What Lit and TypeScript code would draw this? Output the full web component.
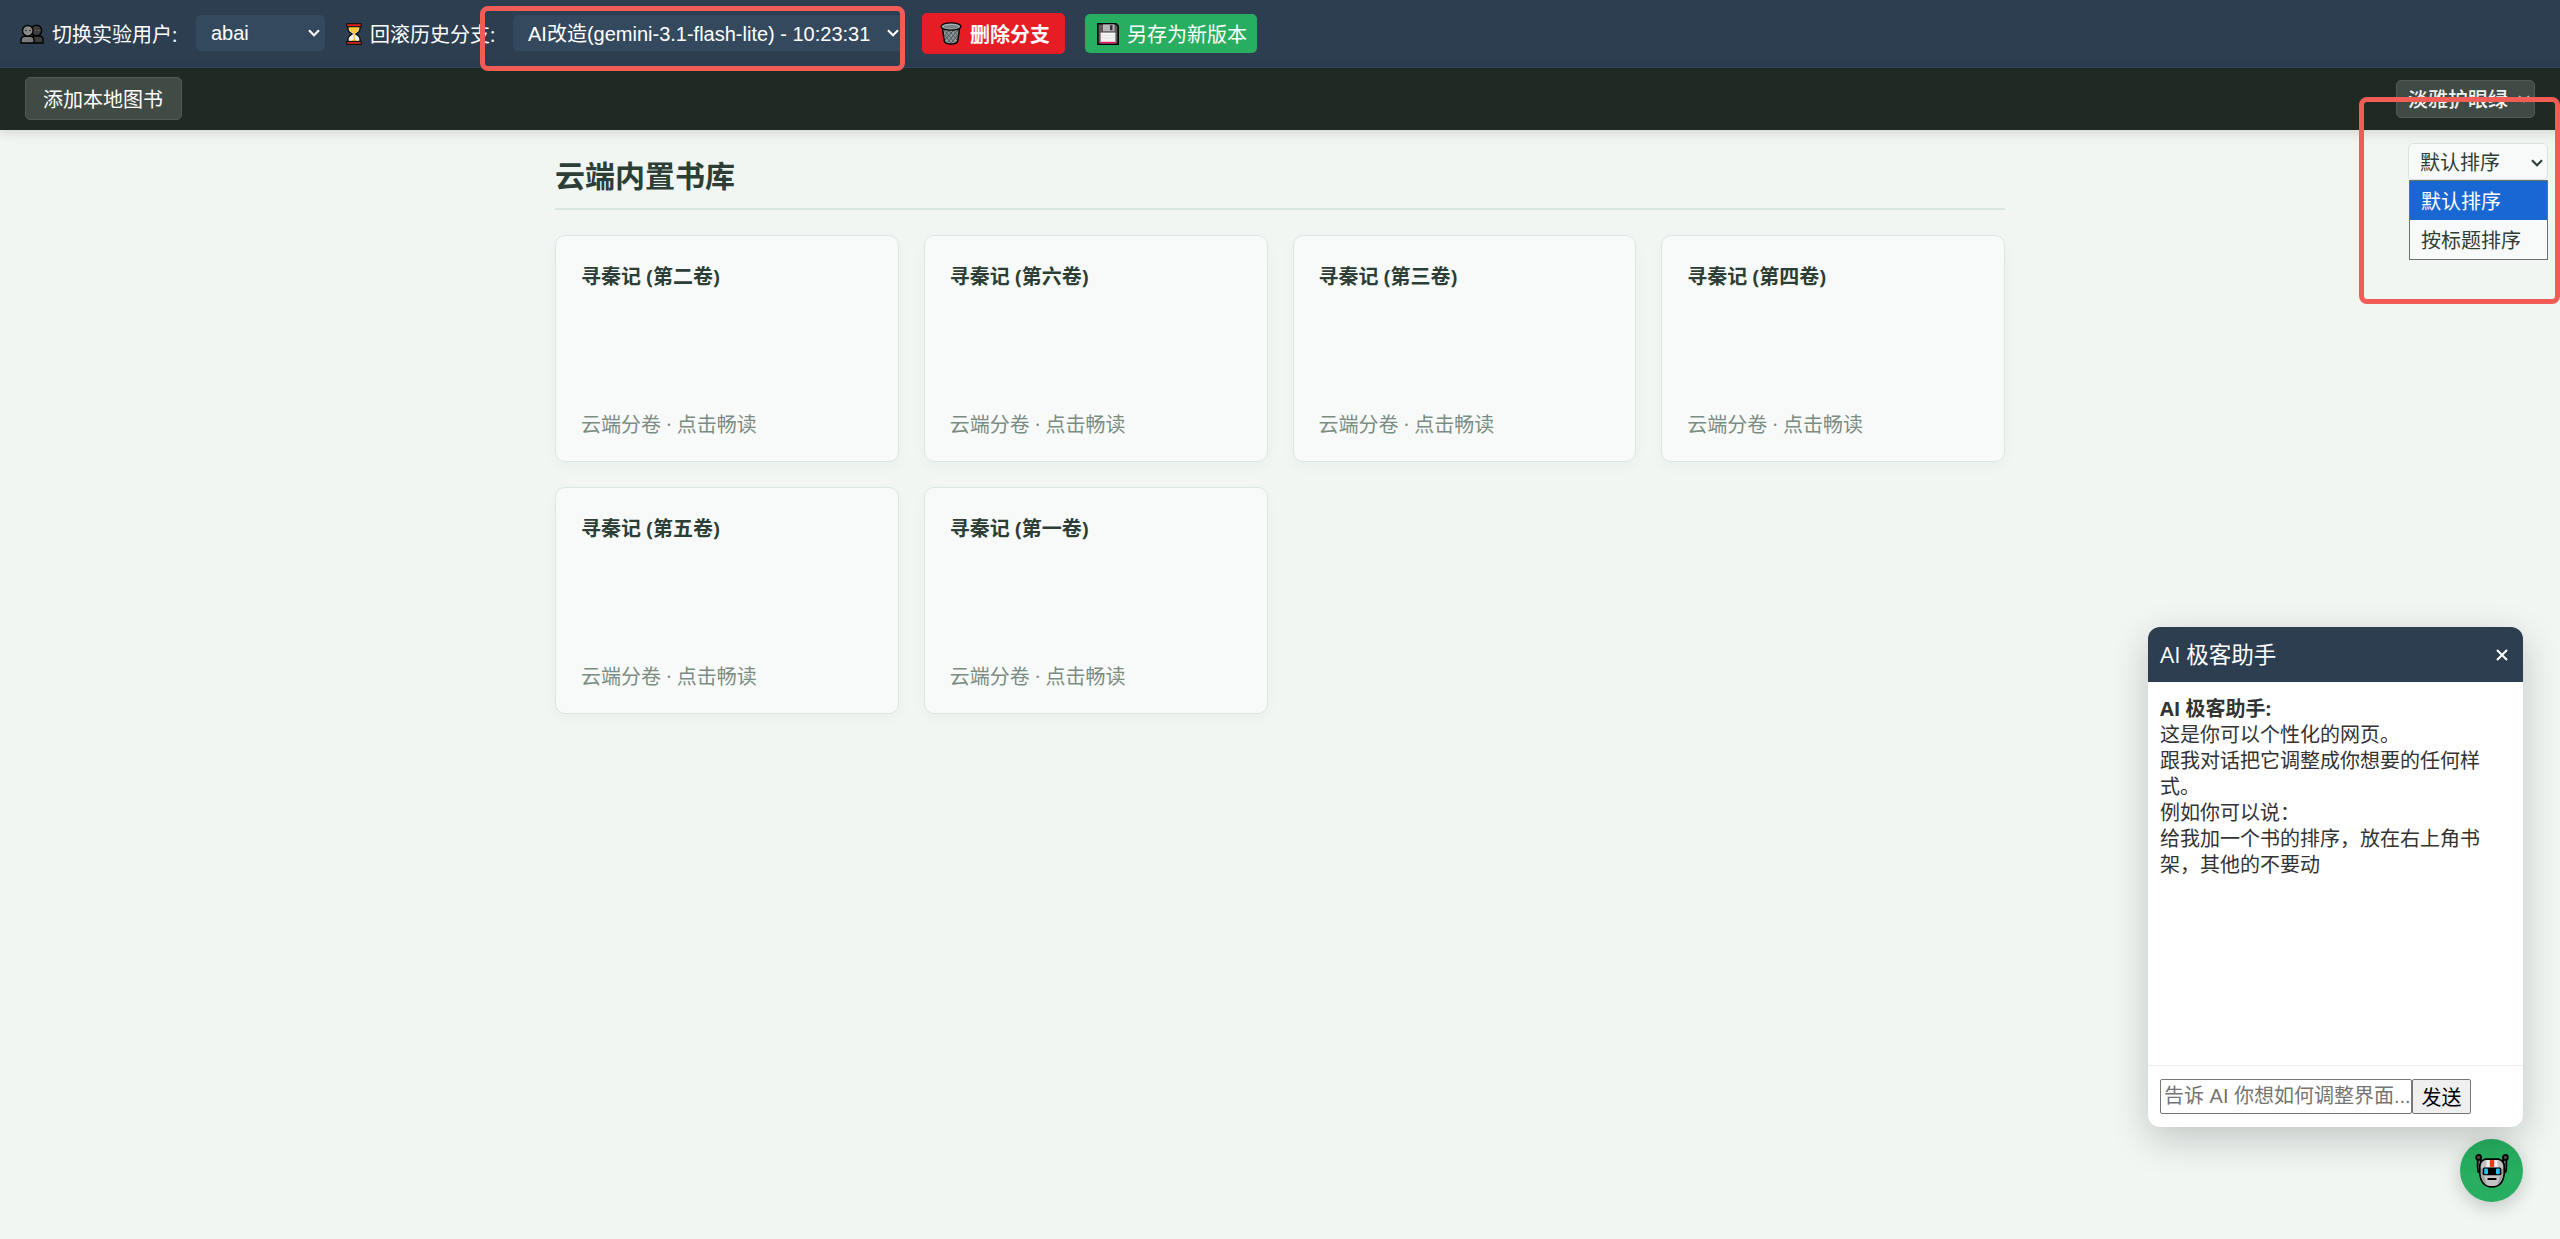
import { LitElement, html, css } from "lit";
import { customElement, property } from "lit/decorators.js";

const chevron = html`<svg class="chevron" viewBox="0 0 12 8" width="12" height="8">
  <path d="M1 1.2 L6 6.2 L11 1.2" fill="none" stroke="currentColor" stroke-width="2.1" />
</svg>`;

const usersIcon = html`<svg viewBox="0 0 24 20" width="24" height="20">
  <g stroke="#000" stroke-width="1.4">
    <path d="M11 19 V16 Q11 12 15 12 H19 Q23 12 23 16 V19 Z" fill="#3d3d3d" />
    <circle cx="16.4" cy="6.6" r="5.3" fill="#3d3d3d" />
    <path d="M1 19 V16 Q1 12.4 5 12.4 H10 Q14 12.4 14 16 V19 Z" fill="#7b7b7b" />
    <circle cx="7.8" cy="6.8" r="5.3" fill="#8b8b8b" />
  </g>
  <g fill="#222"><circle cx="6" cy="6.5" r=".8" /><circle cx="10" cy="6.5" r=".8" /></g>
  <g fill="#888"><circle cx="15.5" cy="6.5" r=".6" /><circle cx="18.6" cy="6.5" r=".6" /></g>
</svg>`;

const hourglassIcon = html`<svg viewBox="0 0 16 22" width="16" height="22">
  <path d="M2 3 H14 V6 Q14 8.5 9.8 11 Q14 13.5 14 16 V19 H2 V16 Q2 13.5 6.2 11 Q2 8.5 2 6 Z" fill="#f4f1ea" stroke="#111" stroke-width="1.4" />
  <path d="M3 4 H13 V6 Q12.6 8 8 10.6 Q3.4 8 3 6 Z" fill="#ffc83d" />
  <path d="M7.4 10 H8.8 V16 L11 18.4 H5.2 L7.4 16 Z" fill="#ffc83d" />
  <rect x=".7" y=".7" width="14.6" height="3" fill="#e2231a" stroke="#111" stroke-width="1.1" />
  <rect x=".7" y="18.4" width="14.6" height="3" fill="#c3271b" stroke="#111" stroke-width="1.1" />
</svg>`;

const trashIcon = html`<svg viewBox="0 0 22 23" width="22" height="23">
  <path d="M2.3 5 L4.2 18.5 Q4.5 22 11 22 Q17.5 22 17.8 18.5 L19.7 5 Z" fill="#8f9799" stroke="#000" stroke-width="1.5" />
  <path d="M4 8 L14.5 20.5 M7.5 7 L17 18 M12 7 L17.8 14 M16 7 L18.5 10 M4.8 13 L10.5 20.5 M18 8 L7.5 20.5 M14.5 7 L5 18 M10 7 L4.6 14 M17.4 13.5 L11.5 20.5" stroke="#3f474a" stroke-width=".8" fill="none" />
  <ellipse cx="11" cy="4.5" rx="9.9" ry="3.6" fill="#a4adb0" stroke="#000" stroke-width="1.4" />
  <ellipse cx="11" cy="4.7" rx="7.5" ry="1.7" fill="#788286" />
</svg>`;

const floppyIcon = html`<svg viewBox="0 0 22 22" width="22" height="22">
  <path d="M.8 .8 H19 L21.2 3 V21.2 H.8 Z" fill="#5a5a5a" stroke="#000" stroke-width="1.5" />
  <rect x="6" y="1.4" width="11.5" height="6.8" fill="#b5b5b5" />
  <rect x="13" y="2.2" width="2.5" height="5" fill="#333" />
  <rect x="3.6" y="9.6" width="14.8" height="10.6" fill="#f3f3f3" />
  <path d="M4 12.5 H18 M4 15 H18" stroke="#dadada" stroke-width=".6" />
  <rect x="3.6" y="18.8" width="14.8" height="1.6" fill="#e3175f" />
</svg>`;

const robotIcon = html`<svg viewBox="0 0 34 34" width="34" height="34">
  <g stroke="#000" stroke-width="1.7">
    <path d="M2.6 4 H5.6 L6.6 12 V18 L3.2 18 L2.6 13 Z" fill="#767676" />
    <path d="M31.4 4 H28.4 L27.4 12 V18 L30.8 18 L31.4 13 Z" fill="#767676" />
    <circle cx="3.6" cy="3.4" r="2.5" fill="#4c4c4c" />
    <circle cx="30.4" cy="3.4" r="2.5" fill="#4c4c4c" />
    <path d="M10 5.2 H24 Q29.2 7 29.2 12.5 V20 Q27.6 32.9 17 32.9 Q6.4 32.9 4.8 20 V12.5 Q4.8 7 10 5.2 Z" fill="#c4c4c4" />
  </g>
  <path d="M6 13 V20 Q7 27 11.4 30.2 L9 22 Z M28 13 V20 Q27 27 22.6 30.2 L25 22 Z" fill="#a0a0a0" />
  <path d="M11.5 6.1 H22.5 V13 H11.5 Z" fill="#f4f4f4" />
  <rect x="14.8" y="6.1" width="4.4" height="6.8" fill="#f03a17" />
  <rect x="7.6" y="13.4" width="18.8" height="7.8" rx="1.6" fill="#000" />
  <rect x="9.2" y="14.4" width="3.8" height="5.8" rx="1.2" fill="#26c0f5" />
  <rect x="21" y="14.4" width="3.8" height="5.8" rx="1.2" fill="#26c0f5" />
  <rect x="12.6" y="24" width="8.8" height="2" fill="#000" />
</svg>`;

@customElement("book-card")
export class BookCard extends LitElement {
  @property() name = "";

  static styles = css`
    :host {
      display: flex;
      flex-direction: column;
      justify-content: space-between;
      box-sizing: border-box;
      height: 227px;
      padding: 26px 25px 23px;
      border: 1px solid #dae6e1;
      border-radius: 10px;
      background: #f8faf9;
      box-shadow: 0 5px 15px rgba(0, 0, 0, 0.03);
    }
    .title {
      font-weight: 700;
      line-height: 30px;
      color: #2c3e35;
    }
    .meta {
      line-height: 26px;
      color: #7b8c83;
    }
  `;

  render() {
    return html`<div class="title">${this.name}</div>
      <div class="meta">云端分卷 · 点击畅读</div>`;
  }
}

@customElement("ai-chat")
export class AiChat extends LitElement {
  static styles = css`
    :host {
      display: flex;
      flex-direction: column;
      width: 375px;
      height: 500px;
      border-radius: 12px;
      overflow: hidden;
      background: #fff;
      color: #333;
      box-shadow: 0 12px 38px rgba(0, 0, 0, 0.2);
    }
    .head {
      display: flex;
      justify-content: space-between;
      align-items: center;
      height: 55px;
      box-sizing: border-box;
      padding: 0 15px 0 12px;
      background: #2c3e50;
      color: #fff;
      font-size: 22.5px;
      line-height: 32px;
    }
    .log {
      flex: 1;
      padding: 14px 12px 10px;
      line-height: 26px;
    }
    .log p {
      margin: 0;
    }
    .log .who {
      font-weight: 700;
    }
    .foot {
      display: flex;
      height: 62px;
      box-sizing: border-box;
      padding: 13px 12px;
      border-top: 1px solid #eee;
    }
    input,
    button {
      box-sizing: border-box;
      height: 35px;
      margin: 0;
      border: 1px solid #767676;
      border-radius: 2px;
      font: 400 20px "Liberation Sans", "Noto Sans CJK SC", sans-serif;
    }
    input {
      width: 252px;
      padding: 0 2px 0 3px;
      background: #fff;
    }
    input::placeholder {
      color: #757575;
    }
    button {
      width: 59px;
      padding: 0;
      background: #efefef;
      color: #000;
    }
  `;

  render() {
    return html`
      <div class="head">
        <span>AI 极客助手</span>
        <svg width="12" height="12" viewBox="0 0 12 12"><path d="M1 1 L11 11 M11 1 L1 11" stroke="#fff" stroke-width="2" /></svg>
      </div>
      <div class="log">
        <p class="who">AI 极客助手:</p>
        <p>这是你可以个性化的网页。</p>
        <p>跟我对话把它调整成你想要的任何样式。</p>
        <p>例如你可以说：</p>
        <p>给我加一个书的排序，放在右上角书架，其他的不要动</p>
      </div>
      <div class="foot">
        <input placeholder="告诉 AI 你想如何调整界面..." /><button>发送</button>
      </div>
    `;
  }
}

@customElement("app-root")
export class AppRoot extends LitElement {
  private books = ["第二卷", "第六卷", "第三卷", "第四卷", "第五卷", "第一卷"];

  static styles = css`
    :host {
      display: block;
      position: relative;
      height: 1239px;
      overflow: hidden;
      background: #f1f6f3;
      font-family: "Open Sans", "Noto Sans CJK SC", sans-serif;
      font-size: 20px;
    }
    svg {
      flex: none;
      display: block;
    }
    .lab {
      display: flex;
      box-sizing: border-box;
      height: 68px;
      padding: 13px 20px 0;
      border-bottom: 1px solid #34495e;
      background: #2c3e50;
      color: #fff;
      white-space: nowrap;
    }
    .label,
    .action {
      line-height: 30px;
    }
    .label span,
    .action span {
      padding-top: 2px;
    }
    .label {
      display: flex;
      align-items: center;
      height: 42px;
    }
    .label.user {
      width: 176px;
      gap: 8px;
    }
    .label.history {
      width: 167px;
      margin-left: 21px;
      gap: 8px;
    }
    .select {
      display: flex;
      align-items: center;
      justify-content: space-between;
      box-sizing: border-box;
      font-family: "Liberation Sans", "Noto Sans CJK SC", sans-serif;
      border-radius: 5px;
    }
    .lab .select {
      height: 36px;
      margin-top: 2px;
      padding: 0 5px 0 15px;
      background: #34495e;
    }
    .user-select {
      width: 129px;
    }
    .branch-select {
      width: 391px;
    }
    .branch-select span {
      padding-bottom: 2px;
    }
    .action {
      display: flex;
      align-items: center;
      box-sizing: border-box;
      border-radius: 5px;
    }
    .remove {
      width: 143px;
      height: 41px;
      margin-left: 18px;
      padding-left: 18px;
      gap: 8px;
      background: #e71d25;
      font-weight: 700;
    }
    .save {
      width: 172px;
      height: 39px;
      margin: 1px 0 0 20px;
      padding-left: 12px;
      gap: 8px;
      background: #27ae60;
    }
    .nav {
      display: flex;
      justify-content: space-between;
      align-items: center;
      box-sizing: border-box;
      height: 62px;
      padding: 0 25px;
      background: #1f2a24;
      color: #fff;
      box-shadow: 0 2px 12px rgba(0, 0, 0, 0.15);
    }
    .nav .add,
    .nav .theme {
      box-sizing: border-box;
      border: 1px solid #505b55;
      border-radius: 5px;
      background: #414b45;
    }
    .nav .add {
      width: 157px;
      height: 43px;
      margin-bottom: 1px;
      padding-left: 17px;
      line-height: 44px;
    }
    .nav .theme {
      width: 139px;
      height: 38px;
      padding: 0 4px 2px 11px;
      font-weight: 500;
      color: #f0f3f1;
    }
    .nav .theme .chevron {
      color: #b9c0bc;
      margin-top: 2px;
    }
    .shelf {
      width: 1450px;
      margin: 0 auto;
      padding-top: 24px;
      box-sizing: border-box;
    }
    h2 {
      box-sizing: border-box;
      height: 56px;
      margin: 0 0 25px;
      border-bottom: 2px solid #dae6e1;
      font-size: 30px;
      line-height: 44px;
      color: #2c3e35;
    }
    .grid {
      display: grid;
      grid-template-columns: repeat(4, 1fr);
      gap: 25px;
    }
    .sort {
      position: absolute;
      left: 2408px;
      top: 143px;
      width: 140px;
      color: #2c3e35;
    }
    .sort .select {
      height: 37px;
      padding: 0 4px 0 11px;
      border: 1px solid #dbe2de;
      background: #f8faf9;
    }
    .sort .chevron {
      margin-top: 2px;
    }
    .menu {
      box-sizing: border-box;
      margin: 0 0 0 1px;
      border: 1px solid #6b6f6d;
      background: #f8faf9;
      font-family: "Liberation Sans", "Noto Sans CJK SC", sans-serif;
    }
    .option {
      height: 39px;
      padding-left: 11px;
      line-height: 42px;
    }
    .option.active {
      background: #1967d2;
      color: #fff;
    }
    .fab {
      position: absolute;
      left: 2460px;
      top: 1139px;
      display: flex;
      align-items: center;
      justify-content: center;
      width: 63px;
      height: 63px;
      border-radius: 50%;
      background: #27ae60;
      box-shadow: 0 5px 19px rgba(0, 0, 0, 0.2);
    }
    ai-chat {
      position: absolute;
      left: 2148px;
      top: 627px;
    }
    .mark {
      position: absolute;
      box-sizing: border-box;
      border: 5px solid #f25c57;
      border-radius: 8px;
    }
    .mark.branch {
      left: 480px;
      top: 6px;
      width: 425px;
      height: 65px;
    }
    .mark.sorting {
      left: 2359px;
      top: 97px;
      width: 201px;
      height: 207px;
    }
  `;

  render() {
    return html`
      <div class="lab">
        <div class="label user">${usersIcon}<span>切换实验用户:</span></div>
        <div class="select user-select"><span>abai</span>${chevron}</div>
        <div class="label history">${hourglassIcon}<span>回滚历史分支:</span></div>
        <div class="select branch-select"><span>AI改造(gemini-3.1-flash-lite) - 10:23:31</span>${chevron}</div>
        <div class="action remove">${trashIcon}<span>删除分支</span></div>
        <div class="action save">${floppyIcon}<span>另存为新版本</span></div>
      </div>
      <div class="nav">
        <div class="add">添加本地图书</div>
        <div class="select theme"><span>淡雅护眼绿</span>${chevron}</div>
      </div>
      <div class="shelf">
        <h2>云端内置书库</h2>
        <div class="grid">${this.books.map((b) => html`<book-card .name=${`寻秦记 (${b})`}></book-card>`)}</div>
      </div>
      <div class="sort">
        <div class="select"><span>默认排序</span>${chevron}</div>
        <div class="menu">
          <div class="option active">默认排序</div>
          <div class="option">按标题排序</div>
        </div>
      </div>
      <div class="fab">${robotIcon}</div>
      <ai-chat></ai-chat>
      <div class="mark branch"></div>
      <div class="mark sorting"></div>
    `;
  }
}
